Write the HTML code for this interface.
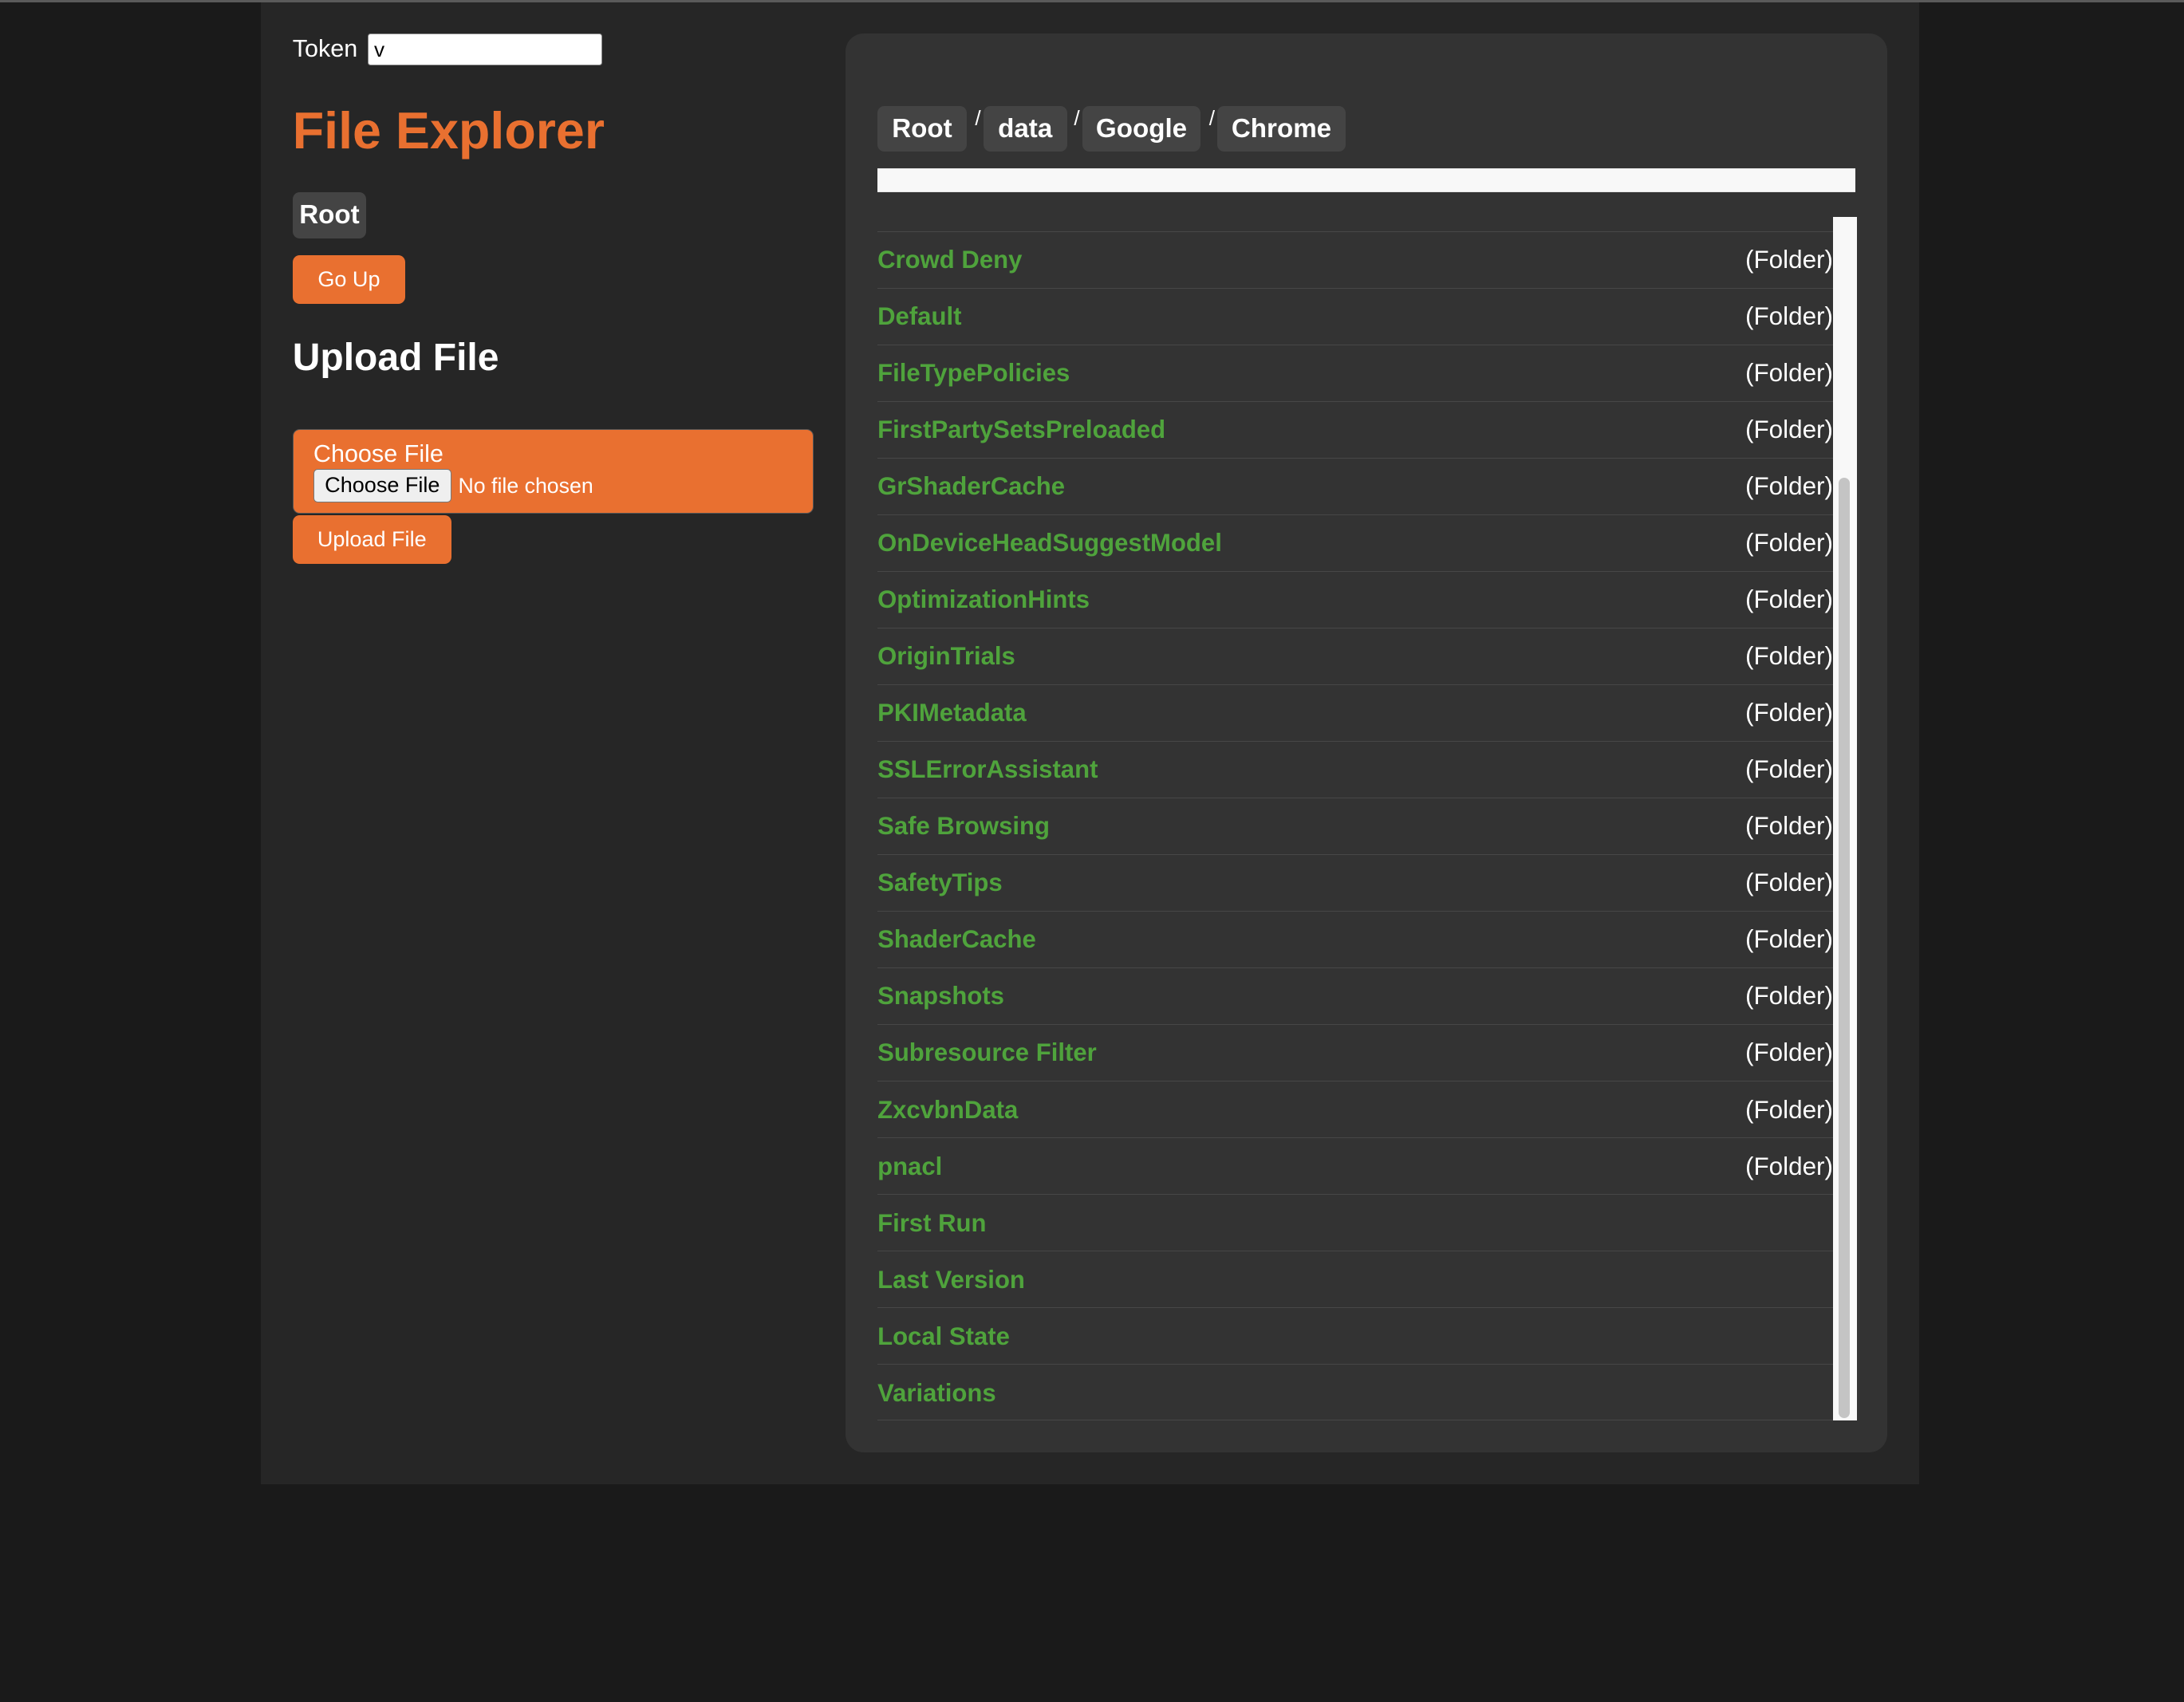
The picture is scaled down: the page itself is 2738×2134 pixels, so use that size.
<!DOCTYPE html>
<html><head><meta charset="utf-8">
<style>
html,body{margin:0;padding:0;background:#1a1a1a;overflow:hidden;}
body{width:2738px;height:2134px;}
#w{zoom:1.7462;position:relative;width:1568px;height:1222px;font-family:"Liberation Sans",Arial,sans-serif;color:#fff;}
.a{position:absolute;}
#top{left:0;top:0;width:1568px;height:1.5px;background:#5a5a5a;}
#main{left:187px;top:1.5px;width:1191px;height:1064.5px;background:#262626;}
.btn{background:#e97030;border-radius:5px;color:#fff;font-size:15.5px;display:flex;align-items:center;justify-content:center;}
.pill{background:#444;border-radius:5px;color:#fff;font-weight:bold;font-size:19px;display:flex;align-items:center;justify-content:center;height:33px;top:76px;}
.sl{top:76px;font-size:15px;color:#fff;}
.row{position:absolute;left:630px;width:686px;height:40.67px;border-top:1px solid #474747;box-sizing:border-box;}
.row .n{position:absolute;left:0;top:10px;color:#4fa33c;font-weight:bold;font-size:17.8px;}
.row .f{position:absolute;right:0;top:10px;color:#fff;font-size:18px;}
</style></head><body><div id="w">
<div class="a" id="top"></div>
<div class="a" id="main"></div>
<div class="a" style="left:210px;top:25px;font-size:17.5px;">Token</div>
<div class="a" style="left:264px;top:24px;height:22px;background:#fff;border:1px solid #888;border-radius:2px;color:#000;font-size:15px;line-height:22px;padding-left:4px;width:163px;">v</div>
<div class="a" style="left:210px;top:73px;font-size:37px;font-weight:bold;color:#e97030;">File Explorer</div>
<div class="a pill" style="left:210px;top:138px;width:53px;height:33px;">Root</div>
<div class="a btn" style="left:210px;top:183px;width:81px;height:35px;">Go Up</div>
<div class="a" style="left:210px;top:241px;font-size:27.5px;font-weight:bold;">Upload File</div>
<div class="a" style="left:210px;top:308px;width:374px;height:61px;background:#e97030;border:1px solid #555;border-radius:5px;box-sizing:border-box;"></div>
<div class="a" style="left:225px;top:316px;font-size:17.5px;">Choose File</div>
<div class="a" style="left:225px;top:337px;width:99px;height:24px;background:#efefef;border:1px solid #777;border-radius:3px;box-sizing:border-box;color:#000;font-size:15.5px;line-height:22px;text-align:center;">Choose File</div>
<div class="a" style="left:329px;top:340px;font-size:15.3px;">No file chosen</div>
<div class="a btn" style="left:210px;top:370px;width:114px;height:35px;">Upload File</div>

<div class="a" style="left:607px;top:24px;width:748px;height:1019px;background:#333;border-radius:13px;"></div>
<div class="a pill" style="left:630px;width:64px;">Root</div>
<div class="a sl" style="left:700px;">/</div>
<div class="a pill" style="left:706px;width:60px;">data</div>
<div class="a sl" style="left:771px;">/</div>
<div class="a pill" style="left:777px;width:85px;">Google</div>
<div class="a sl" style="left:868px;">/</div>
<div class="a pill" style="left:874px;width:92px;">Chrome</div>
<div class="a" style="left:630px;top:121px;width:702px;height:17px;background:#f8f8f8;border-top:1px solid #e8e8e8;border-bottom:1px solid #e8e8e8;box-sizing:border-box;"></div>
<div class="a" style="left:1316px;top:156px;width:17px;height:864px;background:#f8f8f8;"></div>
<div class="a" style="left:1320px;top:343px;width:8px;height:675px;background:#c4c4c4;border-radius:4px;"></div>

<div class="row" style="top:166px"><span class="n">Crowd Deny</span><span class="f">(Folder)</span></div>
<div class="row" style="top:206.67px"><span class="n">Default</span><span class="f">(Folder)</span></div>
<div class="row" style="top:247.33px"><span class="n">FileTypePolicies</span><span class="f">(Folder)</span></div>
<div class="row" style="top:288px"><span class="n">FirstPartySetsPreloaded</span><span class="f">(Folder)</span></div>
<div class="row" style="top:328.67px"><span class="n">GrShaderCache</span><span class="f">(Folder)</span></div>
<div class="row" style="top:369.33px"><span class="n">OnDeviceHeadSuggestModel</span><span class="f">(Folder)</span></div>
<div class="row" style="top:410px"><span class="n">OptimizationHints</span><span class="f">(Folder)</span></div>
<div class="row" style="top:450.67px"><span class="n">OriginTrials</span><span class="f">(Folder)</span></div>
<div class="row" style="top:491.33px"><span class="n">PKIMetadata</span><span class="f">(Folder)</span></div>
<div class="row" style="top:532px"><span class="n">SSLErrorAssistant</span><span class="f">(Folder)</span></div>
<div class="row" style="top:572.67px"><span class="n">Safe Browsing</span><span class="f">(Folder)</span></div>
<div class="row" style="top:613.33px"><span class="n">SafetyTips</span><span class="f">(Folder)</span></div>
<div class="row" style="top:654px"><span class="n">ShaderCache</span><span class="f">(Folder)</span></div>
<div class="row" style="top:694.67px"><span class="n">Snapshots</span><span class="f">(Folder)</span></div>
<div class="row" style="top:735.33px"><span class="n">Subresource Filter</span><span class="f">(Folder)</span></div>
<div class="row" style="top:776px"><span class="n">ZxcvbnData</span><span class="f">(Folder)</span></div>
<div class="row" style="top:816.67px"><span class="n">pnacl</span><span class="f">(Folder)</span></div>
<div class="row" style="top:857.33px"><span class="n">First Run</span></div>
<div class="row" style="top:898px"><span class="n">Last Version</span></div>
<div class="row" style="top:938.67px"><span class="n">Local State</span></div>
<div class="row" style="top:979.33px;border-bottom:1px solid #474747;"><span class="n">Variations</span></div>
</div></body></html>
